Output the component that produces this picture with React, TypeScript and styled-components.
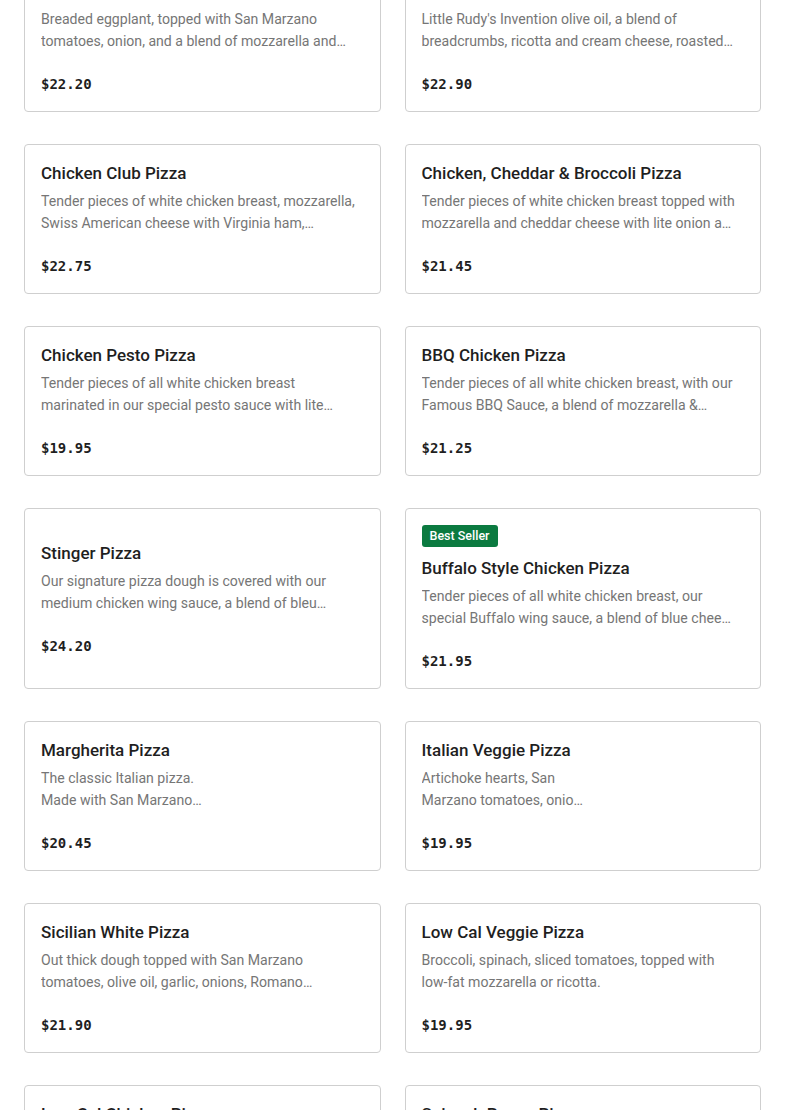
import React from 'react';
import styled, { createGlobalStyle } from 'styled-components';

interface MenuItem {
  name: string;
  description: string;
  price: number;
  badge?: string;
}

const items: MenuItem[] = [
  {
    name: 'Eggplant Parmigiana Pizza',
    description: 'Breaded eggplant, topped with San Marzano tomatoes, onion, and a blend of mozzarella and ricotta cheese.',
    price: 22.2,
  },
  {
    name: "Little Rudy's Pizza",
    description: "Little Rudy's Invention olive oil, a blend of breadcrumbs, ricotta and cream cheese, roasted garlic.",
    price: 22.9,
  },
  {
    name: 'Chicken Club Pizza',
    description: 'Tender pieces of white chicken breast, mozzarella, Swiss American cheese with Virginia ham, applewood-smoked bacon, lettuce and tomato.',
    price: 22.75,
  },
  {
    name: 'Chicken, Cheddar & Broccoli Pizza',
    description: 'Tender pieces of white chicken breast topped with mozzarella and cheddar cheese with lite onion and broccoli.',
    price: 21.45,
  },
  {
    name: 'Chicken Pesto Pizza',
    description: 'Tender pieces of all white chicken breast marinated in our special pesto sauce with lite mozzarella and sliced tomatoes.',
    price: 19.95,
  },
  {
    name: 'BBQ Chicken Pizza',
    description: 'Tender pieces of all white chicken breast, with our Famous BBQ Sauce, a blend of mozzarella & cheddar.',
    price: 21.25,
  },
  {
    name: 'Stinger Pizza',
    description: 'Our signature pizza dough is covered with our medium chicken wing sauce, a blend of bleu cheese.',
    price: 24.2,
  },
  {
    name: 'Buffalo Style Chicken Pizza',
    description: 'Tender pieces of all white chicken breast, our special Buffalo wing sauce, a blend of blue cheese and mozzarella.',
    price: 21.95,
    badge: 'Best Seller',
  },
  {
    name: 'Margherita Pizza',
    description: 'The classic Italian pizza.\nMade with San Marzano\ntomatoes, fresh basil and mozzarella.',
    price: 20.45,
  },
  {
    name: 'Italian Veggie Pizza',
    description: 'Artichoke hearts, San\nMarzano tomatoes, onio\nns, peppers.',
    price: 19.95,
  },
  {
    name: 'Sicilian White Pizza',
    description: 'Out thick dough topped with San Marzano tomatoes, olive oil, garlic, onions, Romano Pecorino cheese and fresh basil.',
    price: 21.9,
  },
  {
    name: 'Low Cal Veggie Pizza',
    description: 'Broccoli, spinach, sliced tomatoes, topped with low-fat mozzarella or ricotta.',
    price: 19.95,
  },
  {
    name: 'Low Cal Chicken Pizza',
    description: 'Tender pieces of white chicken breast, topped with low-fat mozzarella.',
    price: 20.95,
  },
  {
    name: 'Spinach Pecan Pizza',
    description: 'Fresh spinach, pecans, a blend of mozzarella and ricotta cheese.',
    price: 21.95,
  },
];

const GlobalStyle = createGlobalStyle`
  body {
    margin: 0;
    background: #ffffff;
    font-family: Roboto, "Noto Sans", sans-serif;
    overflow: hidden;
  }
`;

const Page = styled.main`
  margin-top: -38px;
  padding: 0 24px 24px;
`;

const Grid = styled.div`
  display: grid;
  grid-template-columns: 1fr 1fr;
  column-gap: 24px;
  row-gap: 32px;
`;

const Card = styled.article`
  border: 1px solid #cfcfcf;
  border-radius: 4px;
  padding: 16px;
  display: flex;
  flex-direction: column;
  justify-content: center;
  background: #fff;
  min-width: 0;
`;

const Badge = styled.span`
  align-self: flex-start;
  background: #0b7a40;
  color: #ffffff;
  border-radius: 3px;
  font-size: 12.5px;
  font-weight: 500;
  line-height: 22px;
  padding: 0 8px;
  margin-bottom: 9px;
`;

const Title = styled.h3`
  margin: 0;
  font-size: 17px;
  font-weight: 500;
  line-height: 24px;
  color: #1f1f1f;
`;

const Description = styled.p`
  margin: 5px 0 0;
  padding-right: 6px;
  font-size: 14.1px;
  line-height: 22px;
  color: #767676;
  white-space: pre-line;
  display: -webkit-box;
  -webkit-line-clamp: 2;
  -webkit-box-orient: vertical;
  overflow: hidden;
  min-height: 44px;
`;

const Price = styled.p`
  margin: 21px 0 0;
  font-family: "DejaVu Sans Mono", "Liberation Mono", monospace;
  font-size: 14px;
  font-weight: bold;
  line-height: 22px;
  color: #1f1f1f;
`;

export default function App() {
  return (
    <Page>
      <GlobalStyle />
      <Grid>
        {items.map((item) => (
          <Card key={item.name}>
            {item.badge && <Badge>{item.badge}</Badge>}
            <Title>{item.name}</Title>
            <Description>{item.description}</Description>
            <Price>${item.price.toFixed(2)}</Price>
          </Card>
        ))}
      </Grid>
    </Page>
  );
}
